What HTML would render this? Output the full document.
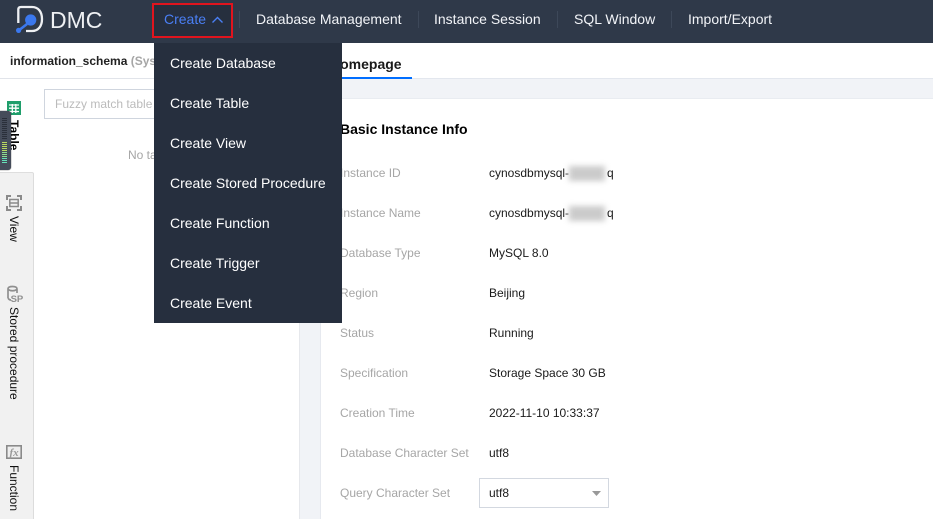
<!DOCTYPE html>
<html><head><meta charset="utf-8">
<style>
html,body{margin:0;padding:0;width:933px;height:519px;overflow:hidden;background:#fff;font-family:"Liberation Sans",Arial,sans-serif;font-size:12px;color:#000}
.a{position:absolute;white-space:nowrap}
.nav{font-size:14px;top:11px;line-height:16px;color:#f2f4f8}
.sep{position:absolute;top:11px;width:1px;height:17px;background:#3d4859}
.mi{position:absolute;left:170px;color:#fff;font-size:14px;line-height:16px;white-space:nowrap}
.lb{position:absolute;left:340px;color:#a6a6a6;font-size:12px;line-height:14px;white-space:nowrap}
.v{position:absolute;left:489px;color:#1a1a1a;font-size:12px;line-height:14px;white-space:nowrap}
.blur{position:absolute;left:569px;width:36px;height:15px;background:#cbcbcb;filter:blur(3px)}
.vt{position:absolute;writing-mode:vertical-rl;left:6px;font-size:12px;line-height:16px;white-space:nowrap;color:#111}
</style></head><body>
<div class="a" style="left:0;top:0;width:933px;height:43px;background:#2f3949"></div>

<svg class="a" style="left:0;top:0" width="50" height="40" viewBox="0 0 50 40">
<path d="M18.3 23 V9.5 Q18.3 7 21 7 H32 C38.5 7 42 12 42 19 C42 26 38.5 31 32 31 H26" fill="none" stroke="#eef0f3" stroke-width="2.3"/>
<circle cx="30.7" cy="20" r="5.6" fill="#3b78ee"/>
<path d="M27 24 L20 29.5" stroke="#3b78ee" stroke-width="2.6"/>
<circle cx="18.6" cy="30.4" r="2.6" fill="#3b78ee"/>
</svg>
<div class="a" style="left:50px;top:6px;color:#eef0f3;font-size:23px;line-height:28px">DMC</div>

<div class="a" style="left:152px;top:3px;width:81px;height:35px;box-sizing:border-box;border:2px solid #e0141e;background:#262f3e"></div>
<div class="a nav" style="left:164px;color:#4a7ff5">Create</div>
<svg class="a" style="left:211px;top:15px" width="13" height="9" viewBox="0 0 13 9"><path d="M1.5 7.5 L6.5 2.5 L11.5 7.5" fill="none" stroke="#4a7ff5" stroke-width="1.4"/></svg>
<div class="sep" style="left:239px"></div>
<div class="a nav" style="left:256px">Database Management</div>
<div class="sep" style="left:418px"></div>
<div class="a nav" style="left:434px">Instance Session</div>
<div class="sep" style="left:557px"></div>
<div class="a nav" style="left:574px">SQL Window</div>
<div class="sep" style="left:671px"></div>
<div class="a nav" style="left:688px">Import/Export</div>

<!-- sub header -->
<div class="a" style="left:0;top:78px;width:300px;height:1px;background:#e1e4ea"></div>
<div class="a" style="left:10px;top:54px;font-size:12px;font-weight:bold;line-height:15px;color:#222">information_schema <span style="color:#a6a6a6">(System)</span></div>

<!-- content bg -->
<div class="a" style="left:300px;top:79px;width:633px;height:440px;background:#f1f3f7"></div>
<div class="a" style="left:300px;top:78px;width:633px;height:1px;background:#e3e7ee"></div>
<div class="a" style="left:299px;top:79px;width:1px;height:440px;background:#e6e8ec"></div>
<div class="a" style="left:320px;top:98px;width:613px;height:421px;background:#fff;border-left:1px solid #e6e9ef;border-top:1px solid #e9ecf1;box-sizing:border-box"></div>
<div class="a" style="left:320px;top:77px;width:92px;height:2px;background:#006eff"></div>
<div class="a" style="left:330px;top:56px;font-size:14px;font-weight:bold;line-height:17px;color:#1a1a1a">Homepage</div>
<div class="a" style="left:340px;top:121px;font-size:14px;font-weight:bold;line-height:17px;color:#000">Basic Instance Info</div>

<div class="lb" style="top:166px">Instance ID</div>
<div class="v" style="top:166px">cynosdbmysql-</div>
<div class="blur" style="top:166px"></div>
<div class="v" style="top:166px;left:607px">q</div>
<div class="lb" style="top:206px">Instance Name</div>
<div class="v" style="top:206px">cynosdbmysql-</div>
<div class="blur" style="top:206px"></div>
<div class="v" style="top:206px;left:607px">q</div>
<div class="lb" style="top:246px">Database Type</div><div class="v" style="top:246px">MySQL 8.0</div>
<div class="lb" style="top:286px">Region</div><div class="v" style="top:286px">Beijing</div>
<div class="lb" style="top:326px">Status</div><div class="v" style="top:326px">Running</div>
<div class="lb" style="top:366px">Specification</div><div class="v" style="top:366px">Storage Space 30 GB</div>
<div class="lb" style="top:406px">Creation Time</div><div class="v" style="top:406px">2022-11-10 10:33:37</div>
<div class="lb" style="top:446px">Database Character Set</div><div class="v" style="top:446px">utf8</div>
<div class="lb" style="top:486px">Query Character Set</div>
<div class="a" style="left:479px;top:478px;width:130px;height:30px;box-sizing:border-box;border:1px solid #d3d8e0;background:#fff"></div>
<div class="v" style="top:486px">utf8</div>
<svg class="a" style="left:592px;top:491px" width="9" height="5"><path d="M0 0 H9 L4.5 5 Z" fill="#999"/></svg>

<!-- left panel -->
<div class="a" style="left:44px;top:89px;width:120px;height:30px;box-sizing:border-box;border:1px solid #cfd5de;background:#fff"></div>
<div class="a" style="left:55px;top:97px;color:#bbb;font-size:12px;line-height:14px">Fuzzy match table</div>
<div class="a" style="left:128px;top:148px;color:#a6a6a6;font-size:12px;line-height:14px">No table</div>

<!-- side tabs -->
<div class="a" style="left:0;top:172px;width:34px;height:347px;box-sizing:border-box;background:#f1f1f1;border-top:1px solid #dedede;border-right:1px solid #dcdcdc;border-top-right-radius:2px"></div>
<svg class="a" style="left:7px;top:101px" width="14" height="14" viewBox="0 0 14 14"><rect width="14" height="14" fill="#1f9e6b"/><path d="M2 4H12M2 7.2H12M2 10.5H12M5.3 3V12M8.8 3V12" stroke="#fff" stroke-width="1.3"/></svg>
<div class="vt" style="top:120px;left:6px;font-weight:bold;font-size:12px;color:#000">Table</div>

<!-- overlay widget -->
<div class="a" style="left:-4px;top:111px;width:15px;height:59px;background:#454c5a;border-radius:3px;box-shadow:0 0 1px #222"></div>
<svg class="a" style="left:2px;top:118px" width="5" height="46">
<g fill="#2a2f3a"><rect y="0" width="5" height="1"/><rect y="2" width="5" height="1"/><rect y="4" width="5" height="1"/><rect y="6" width="5" height="1"/><rect y="8" width="5" height="1"/><rect y="10" width="5" height="1"/><rect y="12" width="5" height="1"/><rect y="14" width="5" height="1"/><rect y="16" width="5" height="1"/><rect y="18" width="5" height="1"/><rect y="20" width="5" height="1"/></g>
<g fill="#b8d860"><rect y="24" width="5" height="1"/><rect y="26" width="5" height="1"/><rect y="28" width="5" height="1"/><rect y="30" width="5" height="1"/><rect y="32" width="5" height="1"/></g>
<g fill="#8fdc8c"><rect y="34" width="5" height="1"/><rect y="36" width="5" height="1"/><rect y="38" width="5" height="1"/></g>
<g fill="#66e0b8"><rect y="40" width="5" height="1"/><rect y="42" width="5" height="1"/><rect y="44" width="5" height="1"/></g></svg>

<svg class="a" style="left:6px;top:195px" width="16" height="16" viewBox="0 0 16 16" fill="none" stroke="#8a8a8a" stroke-width="2"><path d="M1 5V1H5M11 1H15V5M15 11V15H11M5 15H1V11"/><rect x="3.8" y="4.5" width="8.4" height="7" stroke-width="1.5"/><path d="M3.8 8H12.2" stroke-width="1.5"/></svg>
<div class="vt" style="top:216px">View</div>

<svg class="a" style="left:6px;top:285px" width="18" height="18" viewBox="0 0 18 18"><path d="M2 13V4Q2 1.5 6.5 1.5T11 4V8M2 4.5Q6.5 7 11 4.5M2 13Q3 15 5 15" fill="none" stroke="#8f8f8f" stroke-width="1.7"/><text x="4.6" y="17" font-family="Liberation Sans" font-size="9.5" font-weight="bold" fill="#8f8f8f">SP</text></svg>
<div class="vt" style="top:307px">Stored procedure</div>

<svg class="a" style="left:6px;top:445px" width="16" height="14" viewBox="0 0 16 14"><rect x=".8" y=".8" width="14.4" height="12.4" fill="#eee" stroke="#8a8a8a" stroke-width="1.6"/><text x="3.5" y="11" font-family="Liberation Serif" font-style="italic" font-weight="bold" font-size="11" fill="#999">fx</text></svg>
<div class="vt" style="top:465px">Function</div>

<!-- dropdown -->
<div class="a" style="left:154px;top:43px;width:188px;height:280px;background:#262f3e"></div>
<div class="mi" style="top:55px">Create Database</div>
<div class="mi" style="top:95px">Create Table</div>
<div class="mi" style="top:135px">Create View</div>
<div class="mi" style="top:175px">Create Stored Procedure</div>
<div class="mi" style="top:215px">Create Function</div>
<div class="mi" style="top:255px">Create Trigger</div>
<div class="mi" style="top:295px">Create Event</div>
</body></html>
